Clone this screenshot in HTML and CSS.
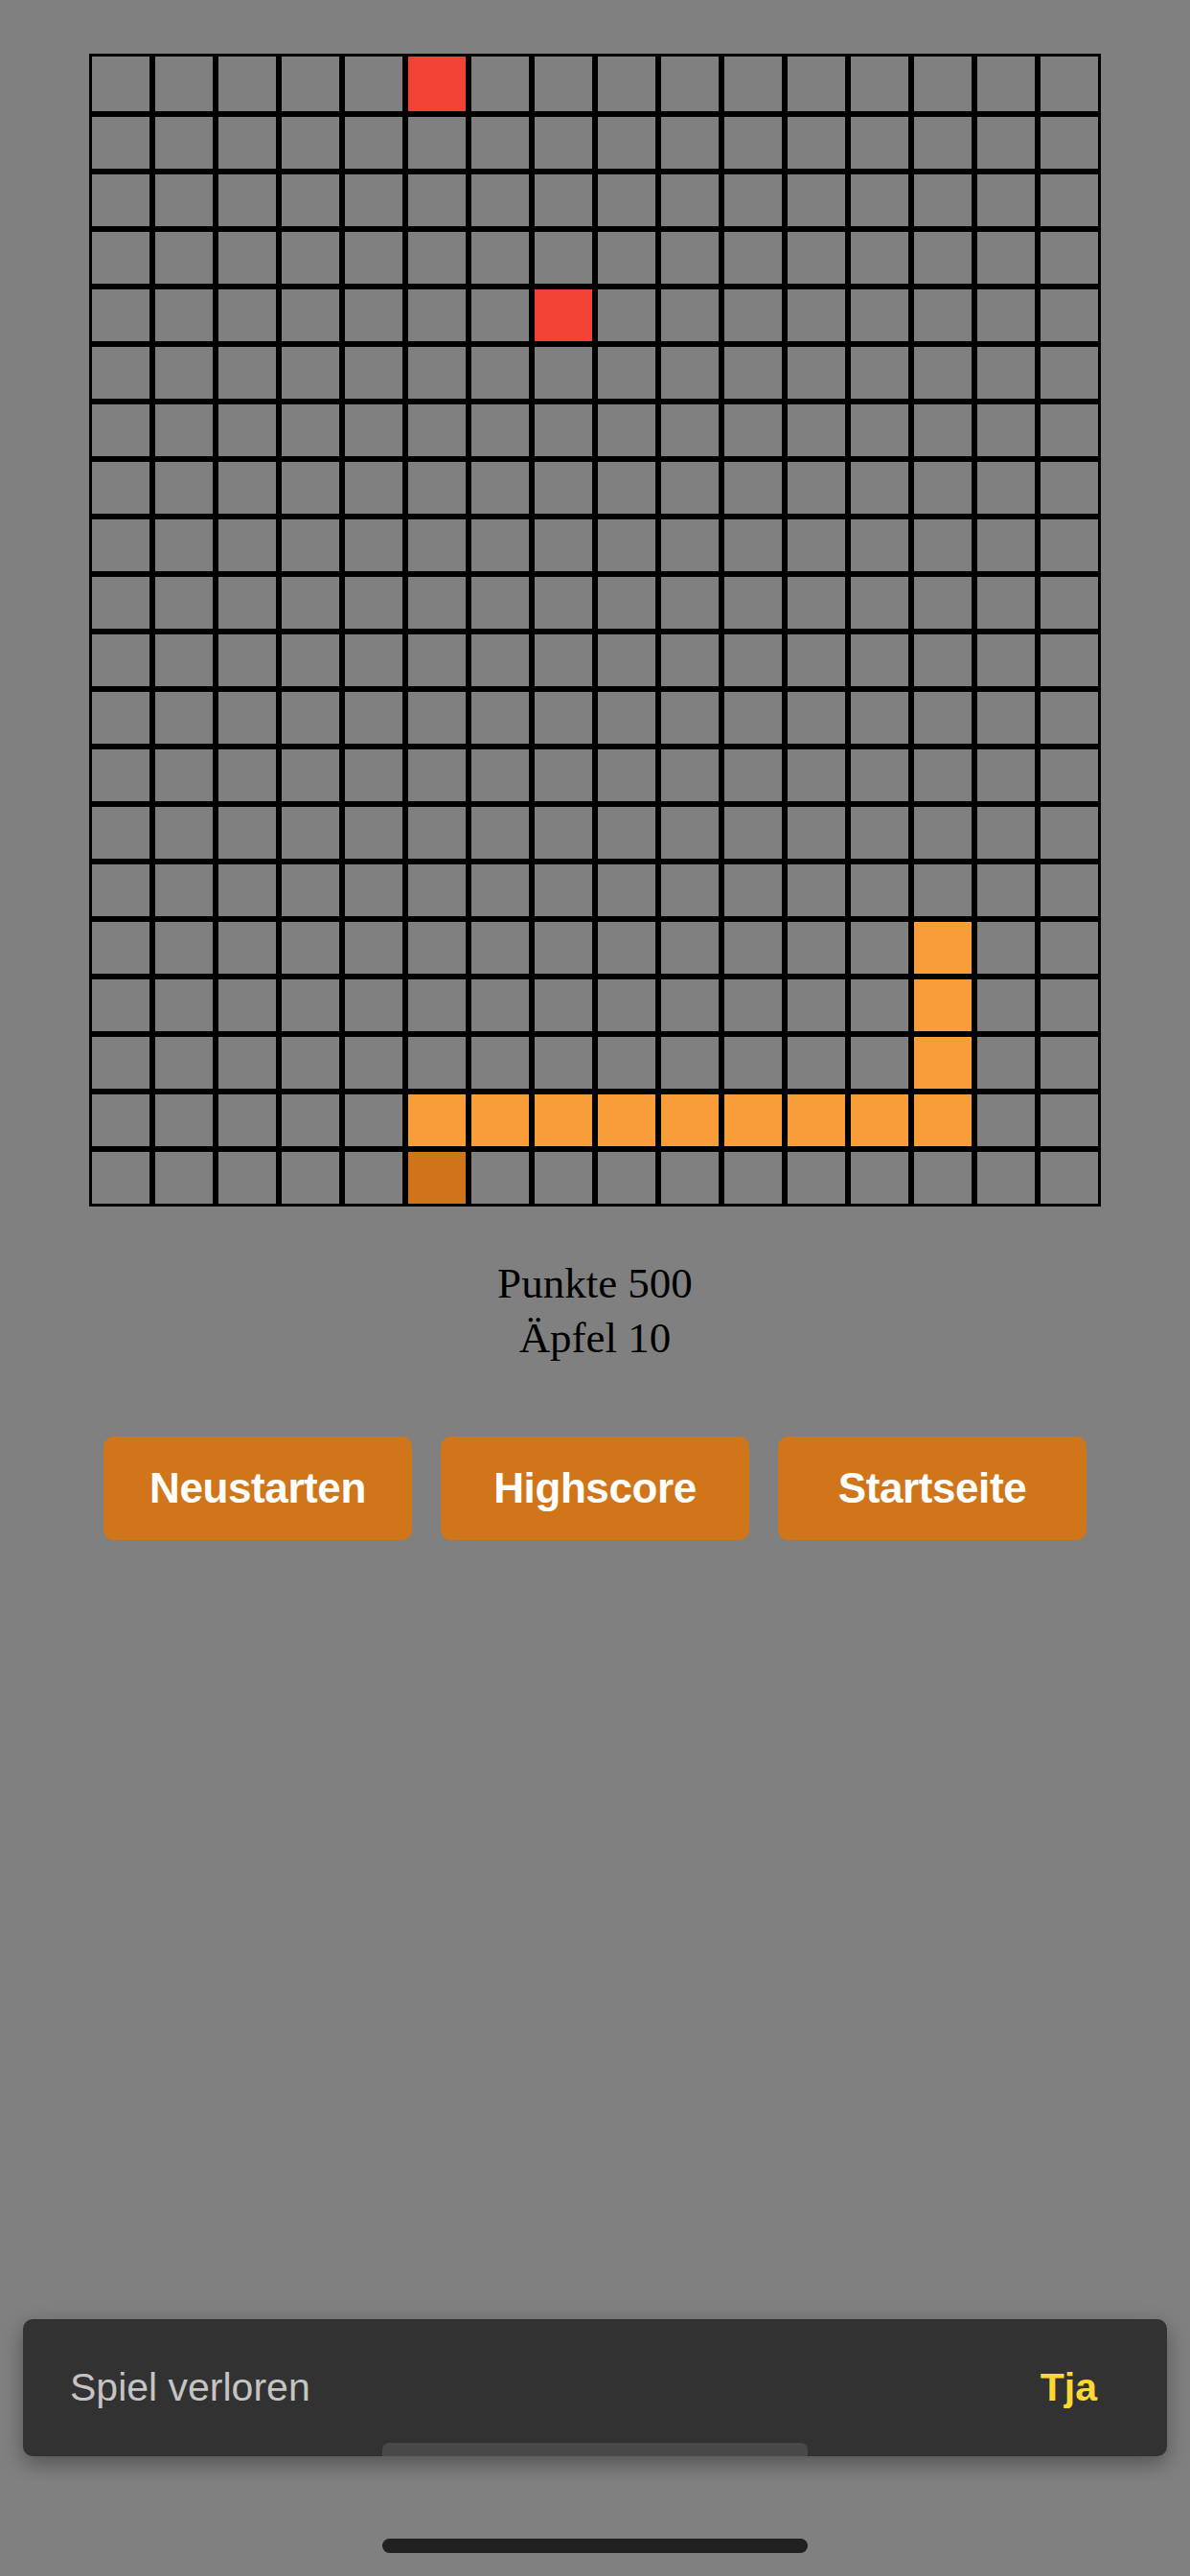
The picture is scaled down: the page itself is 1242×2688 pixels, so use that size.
FILE: index.html
```html
<!DOCTYPE html>
<html lang="de">
<head>
<meta charset="utf-8">
<title>Snake</title>
<link rel="stylesheet" href="styles.css">
</head>
<body>
<main class="page">
  <div class="board">
    <div class="c"></div><div class="c"></div><div class="c"></div><div class="c"></div><div class="c"></div><div class="c apple"></div><div class="c"></div><div class="c"></div><div class="c"></div><div class="c"></div><div class="c"></div><div class="c"></div><div class="c"></div><div class="c"></div><div class="c"></div><div class="c"></div>
    <div class="c"></div><div class="c"></div><div class="c"></div><div class="c"></div><div class="c"></div><div class="c"></div><div class="c"></div><div class="c"></div><div class="c"></div><div class="c"></div><div class="c"></div><div class="c"></div><div class="c"></div><div class="c"></div><div class="c"></div><div class="c"></div>
    <div class="c"></div><div class="c"></div><div class="c"></div><div class="c"></div><div class="c"></div><div class="c"></div><div class="c"></div><div class="c"></div><div class="c"></div><div class="c"></div><div class="c"></div><div class="c"></div><div class="c"></div><div class="c"></div><div class="c"></div><div class="c"></div>
    <div class="c"></div><div class="c"></div><div class="c"></div><div class="c"></div><div class="c"></div><div class="c"></div><div class="c"></div><div class="c"></div><div class="c"></div><div class="c"></div><div class="c"></div><div class="c"></div><div class="c"></div><div class="c"></div><div class="c"></div><div class="c"></div>
    <div class="c"></div><div class="c"></div><div class="c"></div><div class="c"></div><div class="c"></div><div class="c"></div><div class="c"></div><div class="c apple"></div><div class="c"></div><div class="c"></div><div class="c"></div><div class="c"></div><div class="c"></div><div class="c"></div><div class="c"></div><div class="c"></div>
    <div class="c"></div><div class="c"></div><div class="c"></div><div class="c"></div><div class="c"></div><div class="c"></div><div class="c"></div><div class="c"></div><div class="c"></div><div class="c"></div><div class="c"></div><div class="c"></div><div class="c"></div><div class="c"></div><div class="c"></div><div class="c"></div>
    <div class="c"></div><div class="c"></div><div class="c"></div><div class="c"></div><div class="c"></div><div class="c"></div><div class="c"></div><div class="c"></div><div class="c"></div><div class="c"></div><div class="c"></div><div class="c"></div><div class="c"></div><div class="c"></div><div class="c"></div><div class="c"></div>
    <div class="c"></div><div class="c"></div><div class="c"></div><div class="c"></div><div class="c"></div><div class="c"></div><div class="c"></div><div class="c"></div><div class="c"></div><div class="c"></div><div class="c"></div><div class="c"></div><div class="c"></div><div class="c"></div><div class="c"></div><div class="c"></div>
    <div class="c"></div><div class="c"></div><div class="c"></div><div class="c"></div><div class="c"></div><div class="c"></div><div class="c"></div><div class="c"></div><div class="c"></div><div class="c"></div><div class="c"></div><div class="c"></div><div class="c"></div><div class="c"></div><div class="c"></div><div class="c"></div>
    <div class="c"></div><div class="c"></div><div class="c"></div><div class="c"></div><div class="c"></div><div class="c"></div><div class="c"></div><div class="c"></div><div class="c"></div><div class="c"></div><div class="c"></div><div class="c"></div><div class="c"></div><div class="c"></div><div class="c"></div><div class="c"></div>
    <div class="c"></div><div class="c"></div><div class="c"></div><div class="c"></div><div class="c"></div><div class="c"></div><div class="c"></div><div class="c"></div><div class="c"></div><div class="c"></div><div class="c"></div><div class="c"></div><div class="c"></div><div class="c"></div><div class="c"></div><div class="c"></div>
    <div class="c"></div><div class="c"></div><div class="c"></div><div class="c"></div><div class="c"></div><div class="c"></div><div class="c"></div><div class="c"></div><div class="c"></div><div class="c"></div><div class="c"></div><div class="c"></div><div class="c"></div><div class="c"></div><div class="c"></div><div class="c"></div>
    <div class="c"></div><div class="c"></div><div class="c"></div><div class="c"></div><div class="c"></div><div class="c"></div><div class="c"></div><div class="c"></div><div class="c"></div><div class="c"></div><div class="c"></div><div class="c"></div><div class="c"></div><div class="c"></div><div class="c"></div><div class="c"></div>
    <div class="c"></div><div class="c"></div><div class="c"></div><div class="c"></div><div class="c"></div><div class="c"></div><div class="c"></div><div class="c"></div><div class="c"></div><div class="c"></div><div class="c"></div><div class="c"></div><div class="c"></div><div class="c"></div><div class="c"></div><div class="c"></div>
    <div class="c"></div><div class="c"></div><div class="c"></div><div class="c"></div><div class="c"></div><div class="c"></div><div class="c"></div><div class="c"></div><div class="c"></div><div class="c"></div><div class="c"></div><div class="c"></div><div class="c"></div><div class="c"></div><div class="c"></div><div class="c"></div>
    <div class="c"></div><div class="c"></div><div class="c"></div><div class="c"></div><div class="c"></div><div class="c"></div><div class="c"></div><div class="c"></div><div class="c"></div><div class="c"></div><div class="c"></div><div class="c"></div><div class="c"></div><div class="c body"></div><div class="c"></div><div class="c"></div>
    <div class="c"></div><div class="c"></div><div class="c"></div><div class="c"></div><div class="c"></div><div class="c"></div><div class="c"></div><div class="c"></div><div class="c"></div><div class="c"></div><div class="c"></div><div class="c"></div><div class="c"></div><div class="c body"></div><div class="c"></div><div class="c"></div>
    <div class="c"></div><div class="c"></div><div class="c"></div><div class="c"></div><div class="c"></div><div class="c"></div><div class="c"></div><div class="c"></div><div class="c"></div><div class="c"></div><div class="c"></div><div class="c"></div><div class="c"></div><div class="c body"></div><div class="c"></div><div class="c"></div>
    <div class="c"></div><div class="c"></div><div class="c"></div><div class="c"></div><div class="c"></div><div class="c body"></div><div class="c body"></div><div class="c body"></div><div class="c body"></div><div class="c body"></div><div class="c body"></div><div class="c body"></div><div class="c body"></div><div class="c body"></div><div class="c"></div><div class="c"></div>
    <div class="c"></div><div class="c"></div><div class="c"></div><div class="c"></div><div class="c"></div><div class="c head"></div><div class="c"></div><div class="c"></div><div class="c"></div><div class="c"></div><div class="c"></div><div class="c"></div><div class="c"></div><div class="c"></div><div class="c"></div><div class="c"></div>
  </div>

  <div class="score">
    <div class="score-line">Punkte 500</div>
    <div class="score-line">Äpfel 10</div>
  </div>

  <div class="actions">
    <button class="btn">Neustarten</button>
    <button class="btn">Highscore</button>
    <button class="btn">Startseite</button>
  </div>
</main>

<div class="snack-area">
  <div class="snackbar">
    <span class="snack-text">Spiel verloren</span>
    <button class="snack-action">Tja</button>
    <div class="snack-grip"></div>
  </div>
</div>

<div class="home-indicator"></div>
</body>
</html>
```

FILE: styles.css
```css
html, body {
  margin: 0;
  padding: 0;
  width: 1242px;
  height: 2688px;
  overflow: hidden;
  background: #808080;
}

body {
  position: relative;
  font-family: "Liberation Sans", Arial, sans-serif;
}

.page {
  display: flex;
  flex-direction: column;
  align-items: center;
  padding-top: 56px;
}

.board {
  display: grid;
  grid-template-columns: repeat(16, 66px);
  grid-template-rows: 63px repeat(19, 60px);
}

.c {
  box-sizing: border-box;
  border: 3px solid #000;
  background: #808080;
}

.apple {
  background: #f44336;
}

.body {
  background: #f99d3a;
}

.head {
  background: #cf7519;
}

.score {
  margin-top: 52px;
  font-family: "Liberation Serif", "Times New Roman", serif;
  font-size: 45px;
  line-height: 57px;
  color: #000;
  text-align: center;
}

.actions {
  display: flex;
  gap: 30px;
  margin-top: 74px;
}

.btn {
  width: 322px;
  height: 108px;
  border: none;
  border-radius: 11px;
  background: #d07519;
  color: #fff;
  font-family: "Liberation Sans", Arial, sans-serif;
  font-weight: 700;
  font-size: 44px;
  letter-spacing: -0.4px;
  padding: 0;
}

.snack-area {
  position: absolute;
  left: 0;
  right: 0;
  top: 2380px;
  height: 208px;
  overflow: hidden;
}

.snackbar {
  position: relative;
  box-sizing: border-box;
  margin: 40px 24px 0;
  height: 143px;
  border-radius: 10px;
  background: #323232;
  display: flex;
  align-items: center;
  justify-content: space-between;
  padding-left: 49px;
  box-shadow: 0 8px 22px rgba(0, 0, 0, 0.35);
  overflow: hidden;
}

.snack-text {
  font-size: 41px;
  color: #c4c4c4;
}

.snack-action {
  border: none;
  background: transparent;
  color: #fdd835;
  font-family: "Liberation Sans", Arial, sans-serif;
  font-weight: 700;
  font-size: 41px;
  padding: 0 73px 0 20px;
}

.snack-grip {
  position: absolute;
  left: 375px;
  bottom: 0;
  width: 444px;
  height: 14px;
  border-radius: 7px 7px 0 0;
  background: #484848;
}

.home-indicator {
  position: absolute;
  left: 399px;
  top: 2649px;
  width: 444px;
  height: 15px;
  border-radius: 8px;
  background: #212121;
}
```
